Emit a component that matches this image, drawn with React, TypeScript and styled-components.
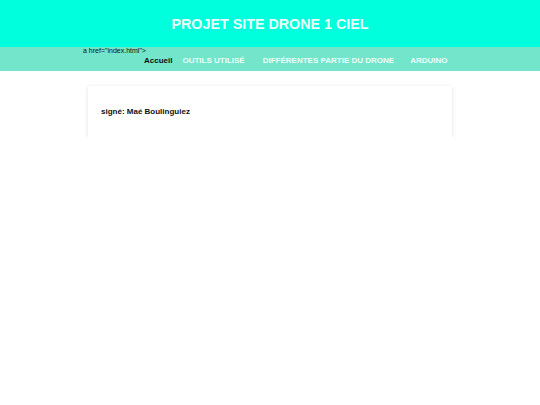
import styled, { createGlobalStyle } from "styled-components";

const Global = createGlobalStyle`
  html, body {
    margin: 0;
    padding: 0;
    background: #ffffff;
    font-family: "Liberation Sans", Arial, sans-serif;
  }
`;

const Header = styled.header`
  height: 47px;
  background: #00ffdd;
  display: flex;
  align-items: center;
  justify-content: center;
  h1 {
    margin: 0;
    color: #eafff9;
    font-size: 14.3px;
    font-weight: 700;
  }
`;

const Nav = styled.nav`
  height: 24px;
  background: #72e5cb;
`;

const NavInner = styled.div`
  padding-left: 83px;
`;

const Stray = styled.div`
  font-size: 7px;
  line-height: 8px;
  color: #111;
`;

const Links = styled.ul`
  display: flex;
  list-style: none;
  margin: 0;
  padding: 0 0 0 61px;
`;

const Link = styled.a<{ $active?: boolean; $gap?: number }>`
  display: block;
  font-size: 8px;
  font-weight: 700;
  line-height: 12px;
  text-decoration: none;
  color: ${({ $active }) => ($active ? "#111" : "#eafffa")};
  margin-right: ${({ $gap }) => $gap ?? 0}px;
`;

const Card = styled.section`
  width: 364px;
  height: 51px;
  margin: 15px 0 0 88px;
  background: #fff;
  box-shadow: 0 1px 4px rgba(0, 0, 0, 0.12);
  box-sizing: border-box;
  padding-left: 13px;
  display: flex;
  align-items: center;
  p {
    margin: 0;
    font-size: 8px;
    font-weight: 700;
    color: #111;
  }
`;

export default function App() {
  return (
    <>
      <Global />
      <Header>
        <h1>PROJET SITE DRONE 1 CIEL</h1>
      </Header>
      <Nav>
        <NavInner>
          <Stray>a href="index.html"&gt;</Stray>
          <Links>
            <li><Link href="#" $active $gap={10}>Accueil</Link></li>
            <li><Link href="#" $gap={18}>OUTILS UTILISÉ</Link></li>
            <li><Link href="#" $gap={16}>DIFFÉRENTES PARTIE DU DRONE</Link></li>
            <li><Link href="#">ARDUINO</Link></li>
          </Links>
        </NavInner>
      </Nav>
      <Card>
        <p>signé: Maé Boulinguiez</p>
      </Card>
    </>
  );
}
